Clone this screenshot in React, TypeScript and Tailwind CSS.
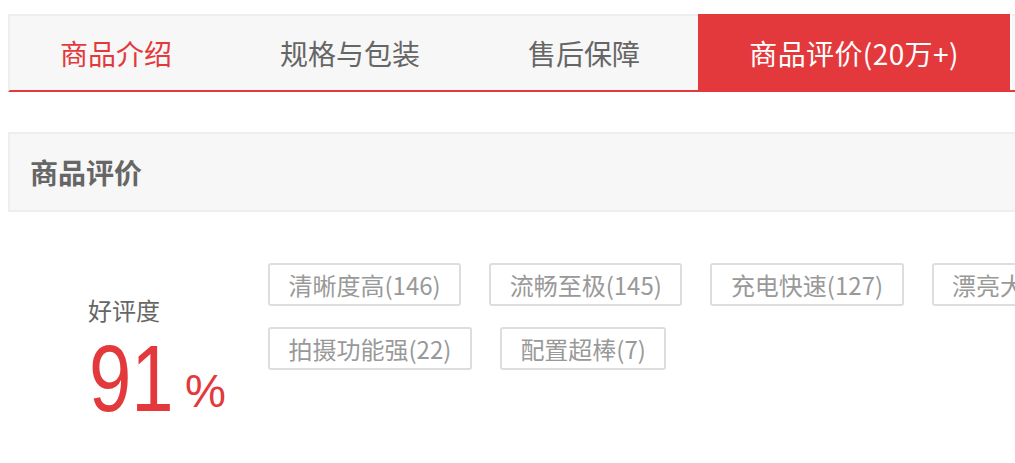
const tabs = [
  { label: '商品介绍', state: 'hover' },
  { label: '规格与包装', state: 'idle' },
  { label: '售后保障', state: 'idle' },
  { label: '商品评价(20万+)', state: 'active' },
];

const tags = [
  '清晰度高(146)',
  '流畅至极(145)',
  '充电快速(127)',
  '漂亮大气(98)',
  '拍摄功能强(22)',
  '配置超棒(7)',
];

export default function App() {
  return (
    <div className="w-[1015px] h-[463px] overflow-hidden bg-white font-['Noto_Sans_CJK_SC',sans-serif]">
      <div className="w-[1200px] pl-[8px] pt-[14px]">
        {/* tab bar */}
        <div className="flex h-[78px] gap-[8px] bg-[#f7f7f7] border-t-2 border-l-2 border-[#eee] border-b-2 border-b-[#e4393c]">
          {tabs.map((tab) =>
            tab.state === 'active' ? (
              <div key={tab.label} className="flex">
                <div className="-mt-[2px] flex w-[312px] items-center justify-center bg-[#e4393c] pt-[2px] text-[28px] tracking-[0.4px] text-white">
                  {tab.label}
                </div>
                <div className="-mt-[2px] w-[2px] bg-white" />
              </div>
            ) : (
              <div
                key={tab.label}
                className={`flex items-center px-[50px] text-[28px] ${
                  tab.state === 'hover' ? 'text-[#e4393c]' : 'text-[#666]'
                }`}
              >
                {tab.label}
              </div>
            )
          )}
        </div>

        {/* section header */}
        <div className="mt-[40px] flex h-[80px] items-center bg-[#f7f7f7] border-2 border-[#eee] pl-[20px]">
          <h3 className="text-[28px] font-bold text-[#666]">商品评价</h3>
        </div>

        {/* rating + tags */}
        <div className="mt-[51px] flex">
          <div className="w-[260px] shrink-0 pl-[80px] pt-[29px]">
            <div className="text-[24px] leading-[36px] text-[#666]">好评度</div>
            <div className="mt-[4px] whitespace-nowrap leading-none text-[#e4393c] font-['Liberation_Sans',Arial,sans-serif]">
              <span className="ml-[1px] inline-block w-[86px] origin-left scale-x-[0.81] text-[94px]">91</span>
              <span className="ml-[10px] text-[46px] align-[4px]">%</span>
            </div>
          </div>
          <div className="flex w-[880px] flex-wrap content-start gap-x-[28px] gap-y-[21px]">
            {tags.map((tag) => (
              <span
                key={tag}
                className="flex h-[43px] items-center rounded-[3px] border-2 border-[#ddd] px-[18.5px] text-[24px] text-[#999]"
              >
                {tag}
              </span>
            ))}
          </div>
        </div>
      </div>
    </div>
  );
}
